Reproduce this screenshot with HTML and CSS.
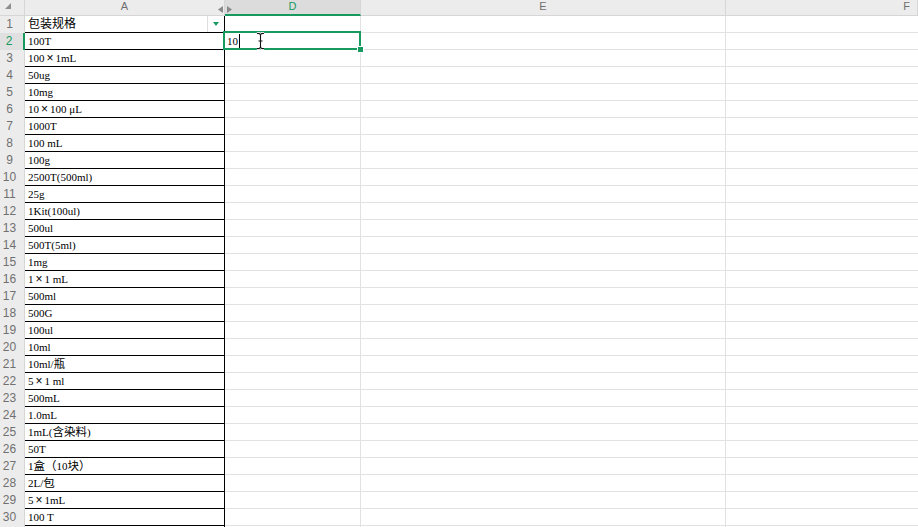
FILE: index.html
```html
<!DOCTYPE html>
<html lang="zh-CN">
  <head>
    <meta charset="UTF-8" />
    <meta name="viewport" content="width=device-width, initial-scale=1.0" />
    <title>Sheet1</title>
    <link rel="stylesheet" href="styles.css">
  </head>
  <body>
    <div id="sheet" class="sheet">
      <div class="corner"></div>
      <div class="col-head">
        A
        <!-- columns B and C are hidden -->
        <svg class="hidden-cols" width="14" height="7" viewBox="0 0 14 7" aria-hidden="true">
          <path d="M5 0 L0 3.5 L5 7 Z" fill="#8a8a8a" />
          <path d="M9 0 L14 3.5 L9 7 Z" fill="#8a8a8a" />
        </svg>
      </div>
      <div class="col-head on">D</div>
      <div class="col-head">E</div>
      <div class="col-head last">F</div>
    </div>

    <script>
      const sheet = document.getElementById("sheet");
      const specs = [
        "包装规格", "100T", "100×1mL", "50ug", "10mg", "10×100 μL", "1000T",
        "100 mL", "100g", "2500T(500ml)", "25g", "1Kit(100ul)", "500ul",
        "500T(5ml)", "1mg", "1×1 mL", "500ml", "500G", "100ul", "10ml",
        "10ml/瓶", "5×1 ml", "500mL", "1.0mL", "1mL(含染料)", "50T",
        "1盒（10块）", "2L/包", "5×1mL", "100 T"
      ];
      const activeRow = 2;

      // Chinese glyphs come from the CJK font; the multiplication sign is full width
      function markCjk(text) {
        return text
          .replace(/[\u3000-\u9fff\uff00-\uffef]+/g, function (m) {
            return '<span class="zh">' + m + "</span>";
          })
          .replace(/\u00d7/g, '<span class="times">\u00d7</span>');
      }

      function makeCell(className, html) {
        const cell = document.createElement("div");
        cell.className = className;
        if (html) cell.innerHTML = html;
        sheet.appendChild(cell);
        return cell;
      }

      // one extra, empty row peeks out under the last one
      specs.concat([null]).forEach(function (spec, i) {
        const row = i + 1;
        makeCell(row === activeRow ? "row-head on" : "row-head", spec === null ? "" : String(row));

        const a = makeCell("cell a", spec ? '<span class="txt">' + markCjk(spec) + "</span>" : "");
        if (row === 1) {
          a.classList.add("title");
          a.insertAdjacentHTML("beforeend", '<button class="filter" aria-label="Filter"></button>');
        }

        if (row === activeRow) {
          makeCell("cell active",
            '<span class="txt">10</span><span class="caret"></span>' +
            '<svg class="ibeam" width="9" height="18" viewBox="0 0 9 18" aria-hidden="true">' +
            '<path d="M1 1.5 Q4.5 1 4.5 3.5 Q4.5 1 8 1.5 M4.5 3.5 V14.5 M2.5 9 H6.5 M1 16.5 Q4.5 17 4.5 14.5 Q4.5 17 8 16.5" fill="none" stroke="#fff" stroke-width="3" />' +
            '<path d="M1 1.5 Q4.5 1 4.5 3.5 Q4.5 1 8 1.5 M4.5 3.5 V14.5 M2.5 9 H6.5 M1 16.5 Q4.5 17 4.5 14.5 Q4.5 17 8 16.5" fill="none" stroke="#111" stroke-width="1.1" />' +
            "</svg>");
        } else {
          makeCell("cell");
        }
        makeCell("cell");
        makeCell("cell last");
      });
    </script>
  </body>
</html>
```

FILE: styles.css
```css
html,
body {
  margin: 0;
  height: 100%;
  background: #fff;
  overflow: hidden;
}

.sheet {
  display: grid;
  grid-template-columns: 25px 200px 136px 365px 1fr;
  grid-template-rows: 16px;
  grid-auto-rows: 17px;
  font-family: "Liberation Serif", "Noto Sans CJK SC", serif;
  font-size: 11px;
  color: #000;
}

/* Headers */
.corner,
.col-head {
  box-sizing: border-box;
  background: #ececec;
  border-right: 1px solid #d6d6d6;
  border-bottom: 1px solid #d6d6d6;
}

.corner {
  position: relative;
}

.corner::after {
  content: "";
  position: absolute;
  left: 5px;
  top: 3px;
  border-style: solid;
  border-width: 0 0 6px 6px;
  border-color: transparent transparent #8e8e8e transparent;
}

.col-head {
  position: relative;
  text-align: center;
  font-family: "Liberation Sans", Arial, sans-serif;
  font-size: 11px;
  line-height: 13px;
  color: #6f6f6f;
}

.col-head.on {
  background: #dcdcdc;
  color: #18995f;
  border-bottom: 2px solid #18995f;
}

.col-head.last {
  text-align: right;
  padding-right: 7px;
}

.hidden-cols {
  position: absolute;
  right: -8px;
  top: 6px;
  z-index: 2;
}

.row-head {
  box-sizing: border-box;
  background: #ececec;
  border-right: 1px solid #d6d6d6;
  padding-right: 5px;
  text-align: center;
  font-family: "Liberation Sans", Arial, sans-serif;
  font-size: 12px;
  line-height: 17px;
  color: #707070;
}

.row-head.on {
  background: #e0e0e0;
  color: #18995f;
  border-right: 2px solid #18995f;
}

/* Cells */
.cell {
  box-sizing: border-box;
  border-right: 1px solid #e2e2e2;
  border-bottom: 1px solid #e2e2e2;
  padding-left: 3px;
  line-height: 16px;
  white-space: nowrap;
  overflow: hidden;
}

.cell.a {
  border-right-color: #000;
  border-bottom-color: #000;
}

.cell.last {
  border-right: none;
}

.zh {
  font-size: 11.5px;
}

.times {
  display: inline-block;
  width: 11px;
  text-align: center;
  font-family: "Liberation Sans", sans-serif;
  font-size: 12px;
}

.cell.title {
  display: flex;
  align-items: flex-start;
  padding-right: 0;
}

.title .zh {
  font-size: 12px;
}

.filter {
  margin-left: auto;
  width: 17px;
  height: 16px;
  padding: 0;
  background: #fff;
  border: none;
  border-left: 1px solid #dedede;
  position: relative;
}

.filter::after {
  content: "";
  position: absolute;
  left: 5px;
  top: 6px;
  border-style: solid;
  border-width: 4px 3.5px 0 3.5px;
  border-color: #18995f transparent transparent transparent;
}

/* Selected cell being edited */
.cell.active {
  position: relative;
  overflow: visible;
  padding-left: 2px;
}

.cell.active::before {
  content: "";
  position: absolute;
  left: -2px;
  top: -2px;
  right: -1px;
  bottom: -1px;
  border: 2px solid #18995f;
  pointer-events: none;
}

.cell.active::after {
  content: "";
  position: absolute;
  right: -4px;
  bottom: -4px;
  width: 5px;
  height: 5px;
  background: #18995f;
  border: 1px solid #fff;
}

.caret {
  display: inline-block;
  width: 1px;
  height: 14px;
  margin-left: 1px;
  vertical-align: -3px;
  background: #000;
}

.ibeam {
  position: absolute;
  left: 31px;
  top: -1px;
}
```
